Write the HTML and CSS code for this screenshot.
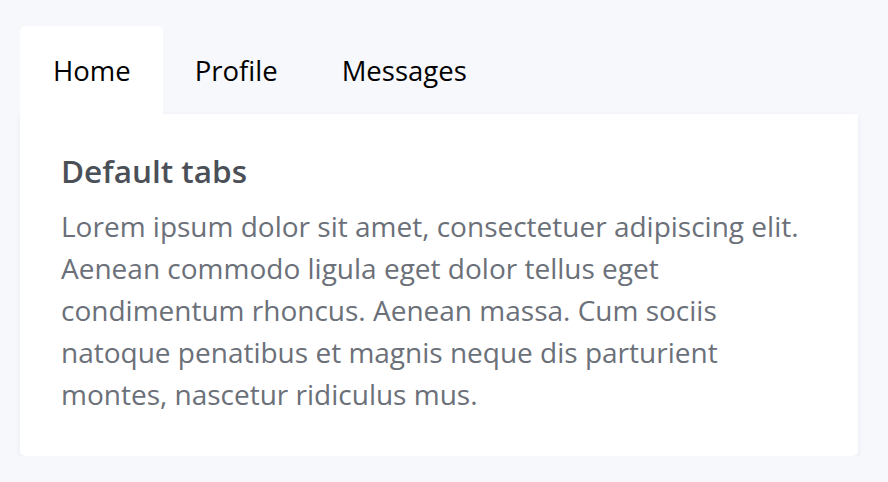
FILE: index.html
```html
<!DOCTYPE html>
<html lang="en">
<head>
<meta charset="utf-8">
<title>Default tabs</title>
<link rel="stylesheet" href="styles.css">
</head>
<body>
<div class="page">
  <ul class="tabs">
    <li class="tab active">Home</li>
    <li class="tab">Profile</li>
    <li class="tab">Messages</li>
  </ul>
  <div class="panel">
    <h2 class="panel-title">Default tabs</h2>
    <p class="panel-text">Lorem ipsum dolor sit amet, consectetuer adipiscing elit. Aenean commodo ligula eget dolor tellus eget condimentum rhoncus. Aenean massa. Cum sociis natoque penatibus et magnis neque dis parturient montes, nascetur ridiculus mus.</p>
  </div>
</div>
</body>
</html>
```

FILE: styles.css
```css
html, body {
  margin: 0;
  padding: 0;
  background: #f7f8fc;
}
body {
  font-family: "Open Sans", "DejaVu Sans", sans-serif;
}
.page {
  padding: 26px 30px 0 20px;
}
.tabs {
  list-style: none;
  margin: 0;
  padding: 0;
  display: flex;
}
.tab {
  height: 88px;
  display: flex;
  align-items: center;
  padding: 0 32px;
  font-size: 27.5px;
  color: #000;
  border-radius: 5px 5px 0 0;
}
.tab:first-child {
  padding-left: 33px;
}
.tab.active {
  background: #fff;
}
.panel {
  background: #fff;
  border-radius: 0 0 5px 5px;
  box-shadow: 0 2px 6px rgba(30, 40, 80, 0.06);
  padding: 40px 40px 41px 41px;
}
.panel-title {
  margin: 0 0 17px;
  font-size: 31.5px;
  font-weight: 600;
  line-height: 34px;
  color: #4b5058;
}
.panel-text {
  margin: 0;
  font-size: 28px;
  line-height: 42px;
  color: #6b7079;
}
```
